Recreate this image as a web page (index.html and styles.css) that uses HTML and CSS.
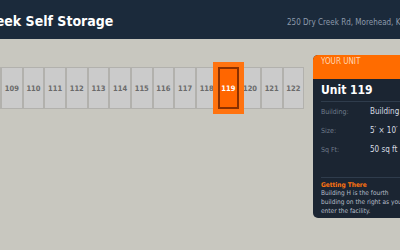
FILE: index.html
```html
<!DOCTYPE html>
<html lang="en">

<head>
    <meta charset="UTF-8" />
    <meta name="viewport" content="width=device-width, initial-scale=1.0" />
    <title>Dry Creek Self Storage</title>
    <link rel="stylesheet" href="styles.css">
</head>

<body>
    <header class="top-bar">
        <h1 class="site-title">Dry Creek Self Storage</h1>
        <p class="site-address">250 Dry Creek Rd, Morehead, KY 40351</p>
    </header>

    <main class="map">
        <div class="unit-row">
            <div class="unit">108</div>
            <div class="unit">109</div>
            <div class="unit">110</div>
            <div class="unit">111</div>
            <div class="unit">112</div>
            <div class="unit">113</div>
            <div class="unit">114</div>
            <div class="unit">115</div>
            <div class="unit">116</div>
            <div class="unit">117</div>
            <div class="unit">118</div>
            <div class="unit selected">119</div>
            <div class="unit">120</div>
            <div class="unit">121</div>
            <div class="unit">122</div>
        </div>
    </main>

    <aside class="unit-card">
        <div class="card-head">Your Unit</div>
        <div class="card-body">
            <h2 class="unit-name">Unit 119</h2>
            <dl class="unit-info">
                <div class="info-row"><dt>Building:</dt><dd>Building H</dd></div>
                <div class="info-row"><dt>Size:</dt><dd>5′ × 10′</dd></div>
                <div class="info-row"><dt>Sq Ft:</dt><dd>50 sq ft</dd></div>
            </dl>
            <div class="directions">
                <h3>Getting There</h3>
                <p>Building H is the fourth building on the right as you enter the facility.</p>
            </div>
        </div>
    </aside>
</body>

</html>
```

FILE: styles.css
```css
body {
    font-family: "DejaVu Sans Condensed", "DejaVu Sans", sans-serif;
    margin: 0;
    width: 400px;
    height: 250px;
    overflow: hidden;
    position: relative;
    background: #c8c7bf;
    color: #333;
}

.top-bar {
    height: 39px;
    background-color: #1b2a3b;
    display: flex;
    justify-content: space-between;
    align-items: center;
    padding-top: 3px;
    box-sizing: border-box;
    white-space: nowrap;
}

.site-title {
    margin: 0 0 0 -49px;
    font-size: 14px;
    font-weight: bold;
    color: #ffffff;
}

.site-address {
    flex: 0 0 113px;
    min-width: 0;
    margin: 2px 0 0;
    font-size: 8px;
    color: #8d9aab;
}

.map {
    padding-top: 28px;
}

.unit-row {
    display: flex;
    margin-left: -20.7px;
}

.unit {
    flex: 0 0 21.67px;
    height: 42px;
    box-sizing: border-box;
    border: 1px solid #b2b1ad;
    background-color: #cbcbcb;
    display: flex;
    align-items: center;
    justify-content: center;
    font-size: 7.5px;
    font-weight: bold;
    color: #6a6a6a;
}

.unit.selected {
    position: relative;
    z-index: 1;
    background-color: #ff6600;
    border: 2px solid #8a3000;
    color: #ffffff;
    box-shadow: 0 0 0 5px #ff7310;
}

/* carte de l'unité */
.unit-card {
    position: absolute;
    left: 313px;
    top: 55px;
    width: 110px;
    border-radius: 5px;
    overflow: hidden;
    background-color: #1b2532;
}

.card-head {
    height: 24px;
    padding: 0 8px;
    background-color: #ff6c00;
    color: #ffd7b5;
    font-size: 8px;
    text-transform: uppercase;
    line-height: 14px;
}

.card-body {
    padding: 4px 8px 2px;
}

.unit-name {
    margin: 0;
    padding-bottom: 4px;
    font-size: 12px;
    color: #ffffff;
    border-bottom: 1px solid #2f3c4c;
}

.unit-info {
    margin: 0;
    padding: 0 0 18px;
    border-bottom: 1px solid #2f3c4c;
}

.info-row {
    display: flex;
    height: 19px;
    align-items: center;
}

.info-row dt {
    width: 49px;
    font-size: 7px;
    color: #6f7b8a;
}

.info-row dd {
    margin: 0;
    font-size: 8px;
    color: #d8dde3;
    white-space: nowrap;
}

.directions h3 {
    margin: 3px 0 0;
    font-size: 6.5px;
    color: #ff7410;
}

.directions p {
    margin: 0;
    font-size: 6.5px;
    line-height: 9px;
    color: #b5bdc8;
    width: 86px;
}
```
